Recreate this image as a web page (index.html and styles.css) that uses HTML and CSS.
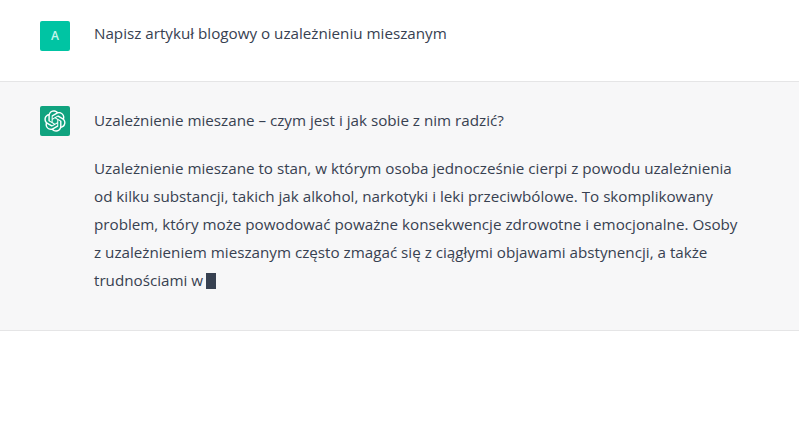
FILE: index.html
```html
<!doctype html>
<html lang="pl">
<head>
    <title>Napisz artykuł blogowy</title>
    <link rel="stylesheet" href="styles.css">
</head>
<body>
    <div class="row row-user">
        <div class="avatar avatar-user">A</div>
        <div class="message">
            <p>Napisz artykuł blogowy o uzależnieniu mieszanym</p>
        </div>
    </div>
    <div class="row row-bot">
        <div class="avatar avatar-bot">
            <svg class="logo" viewBox="0 0 41 41" width="22" height="22" aria-hidden="true">
                <path fill="currentColor" d="M37.5324 16.8707C37.9808 15.5241 38.1363 14.0974 37.9886 12.6859C37.8409 11.2744 37.3934 9.91076 36.676 8.68622C35.6126 6.83404 33.9882 5.3676 32.0373 4.4985C30.0864 3.62941 27.9098 3.40259 25.8215 3.85078C24.8796 2.7893 23.7219 1.94125 22.4257 1.36341C21.1295 0.785575 19.7249 0.491269 18.3058 0.500197C16.1708 0.495044 14.0893 1.16803 12.3614 2.42214C10.6335 3.67624 9.34853 5.44666 8.6917 7.47815C7.30085 7.76286 5.98686 8.3414 4.8377 9.17505C3.68854 10.0087 2.73073 11.0782 2.02839 12.312C0.956464 14.1591 0.498905 16.2988 0.721698 18.4228C0.944492 20.5467 1.83612 22.5449 3.268 24.1293C2.81966 25.4759 2.66413 26.9026 2.81182 28.3141C2.95951 29.7256 3.40701 31.0892 4.12437 32.3138C5.18791 34.1659 6.8123 35.6322 8.76321 36.5013C10.7141 37.3704 12.8907 37.5973 14.9789 37.1492C15.9208 38.2107 17.0786 39.0587 18.3747 39.6366C19.6709 40.2144 21.0755 40.5087 22.4946 40.4998C24.6307 40.5054 26.7133 39.8321 28.4418 38.5772C30.1704 37.3223 31.4556 35.5506 32.1119 33.5179C33.5027 33.2332 34.8167 32.6547 35.9659 31.821C37.115 30.9874 38.0728 29.9178 38.7752 28.684C39.8458 26.8371 40.3023 24.6979 40.0789 22.5748C39.8556 20.4517 38.9639 18.4544 37.5324 16.8707ZM22.4978 37.8849C20.7443 37.8874 19.0459 37.2733 17.6994 36.1501C17.7601 36.117 17.8666 36.0586 17.936 36.0161L25.9004 31.4156C26.1003 31.3019 26.2663 31.137 26.3813 30.9378C26.4964 30.7386 26.5563 30.5124 26.5549 30.2825V19.0542L29.9213 20.998C29.9389 21.0068 29.9541 21.0198 29.9656 21.0359C29.977 21.052 29.9842 21.0707 29.9867 21.0902V30.3889C29.9842 32.375 29.1946 34.2791 27.7909 35.6841C26.3872 37.0892 24.4838 37.8806 22.4978 37.8849ZM6.39227 31.0064C5.51397 29.4888 5.19742 27.7107 5.49804 25.9832C5.55718 26.0187 5.66048 26.0818 5.73461 26.1244L13.699 30.7248C13.8975 30.8408 14.1233 30.902 14.3532 30.902C14.583 30.902 14.8088 30.8408 15.0073 30.7248L24.731 25.1103V28.9979C24.7321 29.0177 24.7283 29.0376 24.7199 29.0556C24.7115 29.0736 24.6988 29.0893 24.6829 29.1012L16.6317 33.7497C14.9096 34.7416 12.8643 35.0097 10.9447 34.4954C9.02506 33.9811 7.38785 32.7263 6.39227 31.0064ZM4.29707 13.6194C5.17156 12.0998 6.55279 10.9364 8.19885 10.3327C8.19885 10.4013 8.19491 10.5228 8.19491 10.6071V19.808C8.19351 20.0378 8.25334 20.2638 8.36823 20.4629C8.48312 20.6619 8.64893 20.8267 8.84863 20.9404L18.5723 26.5542L15.206 28.4979C15.1894 28.5089 15.1703 28.5155 15.1505 28.5173C15.1307 28.5191 15.1107 28.516 15.0924 28.5082L7.04046 23.8557C5.32135 22.8601 4.06716 21.2235 3.55289 19.3046C3.03862 17.3858 3.30624 15.3413 4.29707 13.6194ZM31.955 20.0556L22.2312 14.4411L25.5976 12.4981C25.6142 12.4872 25.6333 12.4805 25.6531 12.4787C25.6729 12.4769 25.6928 12.4801 25.7111 12.4879L33.7631 17.1364C34.9967 17.849 36.0017 18.8982 36.6606 20.1613C37.3194 21.4244 37.6047 22.849 37.4832 24.2684C37.3617 25.6878 36.8382 27.0432 35.9743 28.1759C35.1103 29.3086 33.9415 30.1717 32.6047 30.6641C32.6047 30.5947 32.6047 30.4733 32.6047 30.3889V21.188C32.6066 20.9586 32.5474 20.7328 32.4332 20.5338C32.319 20.3348 32.154 20.1698 31.955 20.0556ZM35.3055 15.0128C35.2464 14.9765 35.1431 14.9142 35.069 14.8717L27.1045 10.2712C26.906 10.1554 26.6803 10.0943 26.4504 10.0943C26.2206 10.0943 25.9948 10.1554 25.7963 10.2712L16.0726 15.8858V11.9982C16.0715 11.9783 16.0753 11.9585 16.0837 11.9405C16.0921 11.9225 16.1048 11.9068 16.1207 11.8949L24.1719 7.25025C25.4053 6.53903 26.8158 6.19376 28.2383 6.25482C29.6608 6.31589 31.0364 6.78077 32.2044 7.59508C33.3723 8.40939 34.2842 9.53945 34.8334 10.8531C35.3826 12.1667 35.5464 13.6095 35.3055 15.0128ZM14.2424 21.9419L10.8752 19.9981C10.8576 19.9893 10.8423 19.9763 10.8309 19.9602C10.8195 19.9441 10.8122 19.9254 10.8098 19.9058V10.6071C10.8107 9.18295 11.2173 7.78848 11.9819 6.58696C12.7466 5.38544 13.8377 4.42659 15.1275 3.82264C16.4173 3.21869 17.8524 2.99464 19.2649 3.1767C20.6775 3.35876 22.0089 3.93941 23.1034 4.85067C23.0427 4.88379 22.937 4.94215 22.8668 4.98473L14.9024 9.58517C14.7025 9.69878 14.5366 9.86356 14.4215 10.0626C14.3065 10.2616 14.2466 10.4877 14.2479 10.7175L14.2424 21.9419ZM16.071 17.9991L20.4018 15.4978L24.7325 17.9975V22.9985L20.4018 25.4983L16.071 22.9985V17.9991Z"/>
            </svg>
        </div>
        <div class="message">
            <p>Uzależnienie mieszane – czym jest i jak sobie z nim radzić?</p>
            <p>Uzależnienie mieszane to stan, w którym osoba jednocześnie cierpi z powodu uzależnienia od kilku substancji, takich jak alkohol, narkotyki i leki przeciwbólowe. To skomplikowany problem, który może powodować poważne konsekwencje zdrowotne i emocjonalne. Osoby z uzależnieniem mieszanym często zmagać się z ciągłymi objawami abstynencji, a także trudnościami w <span class="cursor"></span></p>
        </div>
    </div>
</body>
</html>
```

FILE: styles.css
```css
body {
    margin: 0;
    background-color: #fff;
    color: #374151;
    font-family: "Open Sans", "Noto Sans", sans-serif;
    font-size: 15.2px;
    line-height: 28px;
}
.row {
    display: flex;
    gap: 24px;
    padding: 24px 54px 24px 40px;
    border-bottom: 1px solid #e5e5e6;
}
.row-user {
    box-sizing: border-box;
    height: 82px;
    padding-top: 21px;
}
.row-bot {
    background-color: #f7f7f8;
    padding-bottom: 36px;
}
.avatar {
    flex: none;
    display: flex;
    align-items: center;
    justify-content: center;
    width: 30px;
    height: 30px;
    border-radius: 2px;
    color: #fff;
}
.avatar-user {
    background-color: #00c4a3;
    color: #c8f5ec;
    font-size: 12px;
    font-weight: 600;
}
.avatar-bot {
    background-color: #10a37f;
}
.message {
    flex: 1;
}
.row-user .message {
    margin-top: -2px;
}
.message p {
    margin: 0 0 20px;
}
.message p:last-child {
    margin-bottom: 0;
}
.cursor {
    display: inline-block;
    width: 10px;
    height: 16px;
    margin-left: -1px;
    vertical-align: -3px;
    background-color: #374151;
}
```
